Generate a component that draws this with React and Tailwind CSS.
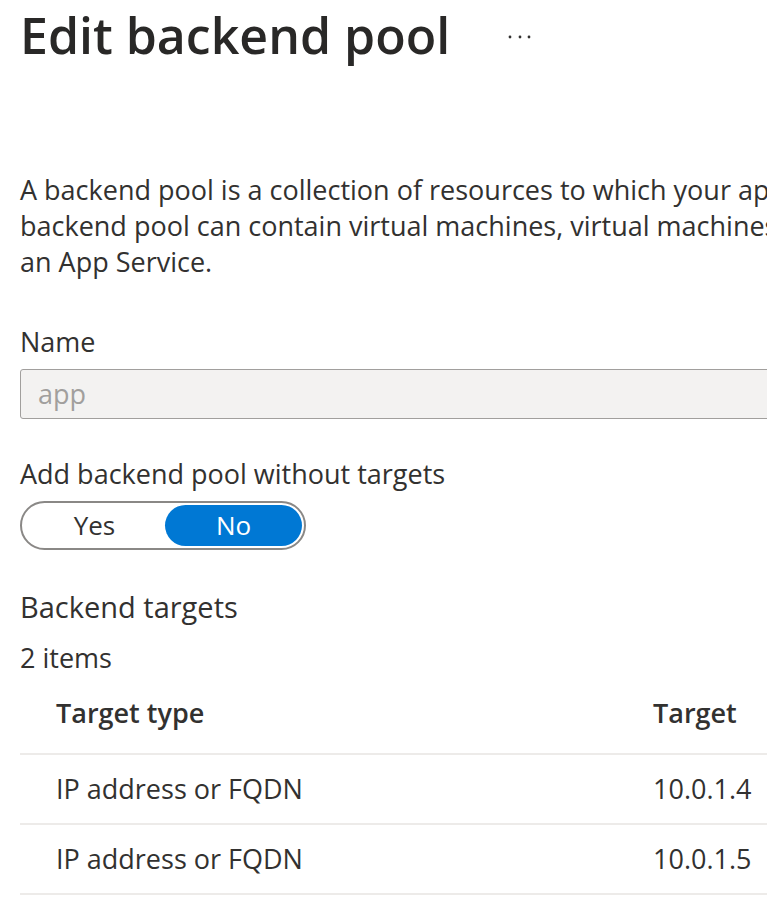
import React from 'react';

const rows = [
  { type: 'IP address or FQDN', target: '10.0.1.4' },
  { type: 'IP address or FQDN', target: '10.0.1.5' },
];

function MoreDots() {
  return (
    <svg width="26" height="6" viewBox="0 0 26 6" className="mt-[34px] shrink-0 text-[#323130]">
      <circle cx="3" cy="3" r="1.4" fill="currentColor" />
      <circle cx="13" cy="3" r="1.4" fill="currentColor" />
      <circle cx="22" cy="3" r="1.4" fill="currentColor" />
    </svg>
  );
}

export default function App() {
  return (
    <div className="w-[767px] h-[898px] overflow-hidden bg-white font-['Open_Sans',sans-serif] text-[#323130]">
      <div className="w-[1000px] pl-[20px]">
        {/* Header */}
        <div className="flex items-start">
          <h1 className="w-[487px] shrink-0 mt-[5px] text-[50px] leading-[60px] font-semibold text-[#292827]">
            Edit backend pool
          </h1>
          <MoreDots />
        </div>

        {/* Description */}
        <p className="mt-[107px] text-[27px] leading-[36px] whitespace-nowrap">
          A backend pool is a collection of resources to which your application gateway can send traffic. A
          <br />
          backend pool can contain virtual machines, virtual machines scale sets, IP addresses, domain names, or
          <br />
          an App Service.
        </p>

        {/* Name */}
        <label className="block mt-[44px] text-[27px] leading-[36px]">Name</label>
        <div className="mt-[9px] h-[50px] w-[900px] flex items-center pl-[17px] border border-[#a19f9d] rounded-[3px] bg-[#f3f2f1] text-[27px] leading-[36px] text-[#a19f9d]">
          app
        </div>

        {/* Toggle */}
        <div className="mt-[37px] text-[27px] leading-[36px]">Add backend pool without targets</div>
        <div className="mt-[9px] inline-flex h-[49px] p-[2px] border-2 border-[#8a8886] rounded-full">
          <button className="w-[141px] h-full rounded-full flex items-center justify-center text-[26px] text-[#323130]">
            Yes
          </button>
          <button className="w-[137px] h-full rounded-full flex items-center justify-center bg-[#0078d4] text-[26px] text-white">
            No
          </button>
        </div>

        {/* Backend targets */}
        <div className="mt-[39px] text-[29px] leading-[36px]">Backend targets</div>
        <div className="mt-[15px] text-[27px] leading-[36px]">2 items</div>

        <div className="w-[900px]">
          <div className="grid grid-cols-[633px_1fr] pt-[19px] pb-[22px] border-b-2 border-[#edebe9] text-[27px] leading-[36px] font-semibold">
            <div className="pl-[36px]">Target type</div>
            <div>Target</div>
          </div>
          {rows.map((r) => (
            <div
              key={r.target}
              className="grid grid-cols-[633px_1fr] h-[70px] pt-[16px] border-b-2 border-[#edebe9] text-[27px] leading-[36px]"
            >
              <div className="pl-[36px]">{r.type}</div>
              <div>{r.target}</div>
            </div>
          ))}
        </div>
      </div>
    </div>
  );
}
